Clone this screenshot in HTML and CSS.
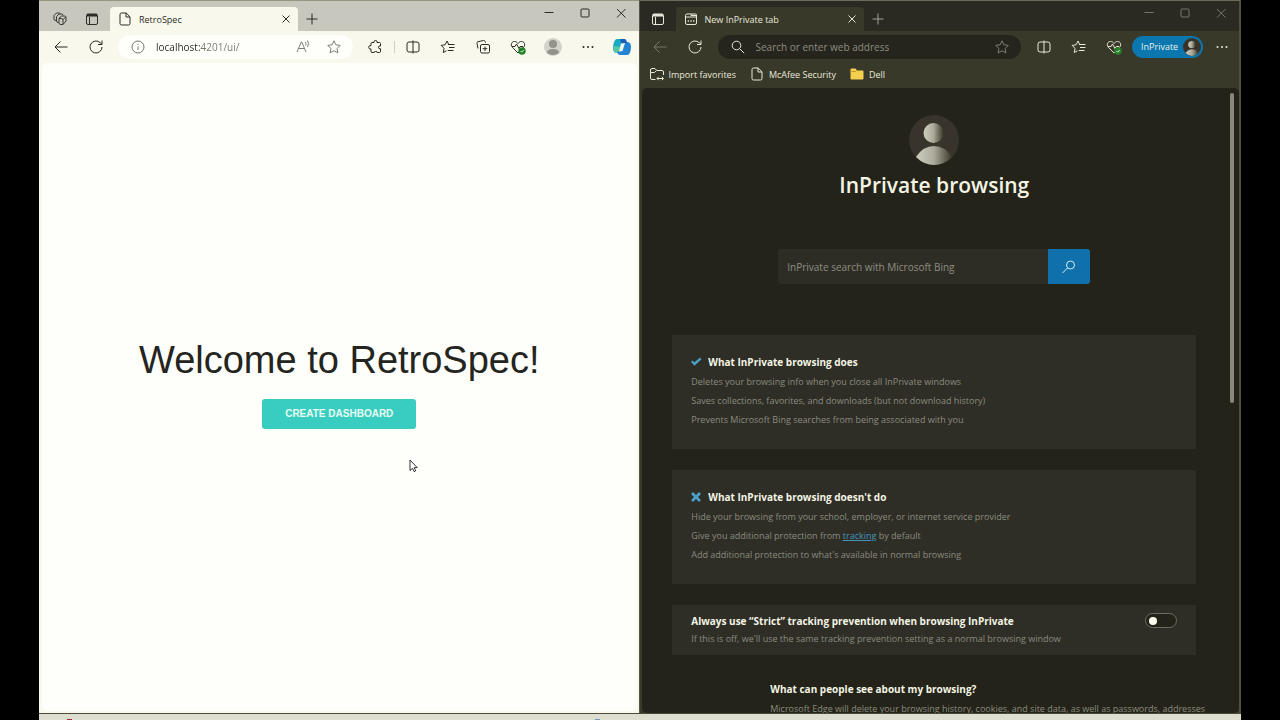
FILE: index.html
```html
<!DOCTYPE html>
<html lang="en">
<head>
<meta charset="utf-8">
<title>RetroSpec</title>
<link rel="stylesheet" href="styles.css">
</head>
<body>
<svg class="sprite" aria-hidden="true">
  <symbol id="back" viewBox="0 0 16 16"><path d="M14.500 8H2M7.500 2.500 2 8l5.500 5.500"/></symbol>
  <symbol id="reload" viewBox="0 0 16 16"><path d="M14 8a6 6 0 1 1-1.800-4.300L14 5.300M14 1.500v4h-4"/></symbol>
  <symbol id="close" viewBox="0 0 16 16"><path d="m4.500 4.500 7 7M11.500 4.500l-7 7"/></symbol>
  <symbol id="plus" viewBox="0 0 16 16"><path d="M8 2.500v11M2.500 8h11"/></symbol>
  <symbol id="min" viewBox="0 0 16 16"><path d="M3.500 7.500h9"/></symbol>
  <symbol id="max" viewBox="0 0 16 16"><rect x="4" y="4" width="8" height="8" rx="1"/></symbol>
  <symbol id="winclose" viewBox="0 0 16 16"><path d="m4 4 8.500 8.500M12.500 4 4 12.500"/></symbol>
  <symbol id="tabs" viewBox="0 0 16 16"><rect x="2.500" y="3" width="11" height="10.500" rx="1.500"/><path d="M5.500 6v7"/><path d="M3 4.300h10" stroke-width="2.500"/></symbol>
  <symbol id="work" viewBox="0 0 16 16"><g stroke-width=".9"><path d="M7 7.300 9.500 5h3q1.500 0 1.500 1.500V10L11 13.500H8.500Q7 13.500 7 12zM7 7.500h2.500q1.500 0 1.500 1.500v4.300M11 8.700l2.800-2.900"/><path d="M6.500 11.500Q4.500 11.500 4.500 10V5.500L7 3h2.500q1.300 0 1.800 1.200M4 9.500Q2 9.500 2 8V4.500L4.500 2H7q1 0 1.500.7"/></g></symbol>
  <symbol id="page" viewBox="0 0 16 16"><path d="M4.500 2h4.700L13 5.800V12.500q0 1.500-1.500 1.500h-7Q3 14 3 12.500v-9Q3 2 4.500 2zM9 2v4h4"/></symbol>
  <symbol id="private" viewBox="0 0 16 16"><path d="M4 3h8.500q1 0 1 1v8q0 1.500-1.500 1.500H4Q2.500 13.500 2.500 12V4.500Q2.500 3 4 3zM2.500 6h11M8 3v1.500h5"/><path d="M4.700 10H6M7.400 10h1.300M10 10h1.300" stroke-width="1.500"/></symbol>
  <symbol id="info" viewBox="0 0 16 16"><circle cx="8" cy="8" r="6"/><path d="M8 7.500v3.500M8 4.800v1"/></symbol>
  <symbol id="read" viewBox="0 0 16 16"><path d="M2 13 6.200 3h.6L11 13M3.500 9.500h6M10.500 3q1 1.500 0 3.500M12.500 1.500q2 3 0 6.500"/></symbol>
  <symbol id="star" viewBox="0 0 16 16"><path d="m8 1.800 1.900 4 4.300.6-3.100 3.100.8 4.400L8 11.800l-3.900 2.100.8-4.400-3.100-3.100 4.300-.6z"/></symbol>
  <symbol id="puzzle" viewBox="0 0 16 16"><path d="M5 3.500h2Q6.500 1.500 8.500 1.500t1.500 2h2.500q1 0 1 1V7q-2-.5-2 1.300t2 1.400v2.800q0 1-1 1h-2.300q.3-1-1.500-1t-1.500 1H5q-1 0-1-1V10q-2.300.3-2.300-1.700T4 6.500v-2q0-1 1-1z"/></symbol>
  <symbol id="split" viewBox="0 0 16 16"><path d="M8 1.500v13M8 3H4Q2 3 2 5v6q0 2 2 2h4M8 3h4q2 0 2 2v6q0 2-2 2H8"/></symbol>
  <symbol id="favs" viewBox="0 0 16 16"><path d="M8.800 5.800 7 2 5.100 5.800l-4 .6 2.900 2.900-.7 4.200 3.200-1.700M8 5.500h6.500M9 8.500h5.500M7.800 11.500h5.700"/></symbol>
  <symbol id="collect" viewBox="0 0 16 16"><path d="M3 9.500 2 4.500Q1.700 3 3 2.700l5.500-1.200q1.300-.2 1.700 1.200l.3 1"/><rect x="5.500" y="5.500" width="9" height="8.500" rx="1.500"/><path d="M10 7.500v4.500M7.700 9.700h4.600"/></symbol>
  <symbol id="heart" viewBox="0 0 16 16"><path d="M8 14 2.300 8.200C.2 5.500 1.700 2.500 4.500 2.500c1.500 0 2.500.7 3.500 2 1-1.300 2-2 3.500-2 2.800 0 4.300 3 2.200 5.700zM2 7.500h3L6.500 5 9 9.500l1.200-2H13"/><circle class="ok" cx="12" cy="12" r="3.700"/><path class="tick" d="m10.500 12 1.200 1.200 2-2.200"/></symbol>
  <symbol id="dots" viewBox="0 0 16 16"><g class="solid"><circle cx="3.500" cy="8" r="1"/><circle cx="8" cy="8" r="1"/><circle cx="12.500" cy="8" r="1"/></g></symbol>
  <symbol id="search" viewBox="0 0 16 16"><circle cx="6.500" cy="6.500" r="4.300"/><path d="m9.700 9.700 4.500 4.500"/></symbol>
  <symbol id="bing" viewBox="0 0 16 16"><circle cx="9.500" cy="6" r="4"/><path d="m6.500 9-5 5"/></symbol>
  <symbol id="import" viewBox="0 0 16 16"><path d="M6.500 13.500H3Q1.500 13.500 1.500 12V4Q1.500 2.500 3 2.500h3l1.700 2H13q1.500 0 1.500 1.500v3M1.500 6.500h4l2-2M8 12.500h6.500M9.700 10.800 8 12.500l1.700 1.700M12.800 10.800l1.700 1.700-1.700 1.700"/></symbol>
  <symbol id="person" viewBox="0 0 50 50"><defs><linearGradient id="metal"><stop offset="0" stop-color="#cfcfc0"/><stop offset=".5" stop-color="#aaa99a"/><stop offset="1" stop-color="#3a3728"/></linearGradient></defs><circle cx="25" cy="25" r="25" fill="#38342b"/><circle cx="24.500" cy="18" r="10" fill="url(#metal)"/><path d="M7 42Q14 31 25 31t18 11Q35 50 25 50T7 42z" fill="url(#metal)"/></symbol>
</svg>

<main class="desktop">
  <section class="window light" aria-label="RetroSpec">
    <header class="tabstrip">
      <button class="tool" aria-label="Workspaces"><svg><use href="#work"/></svg></button>
      <button class="tool" aria-label="Tab actions"><svg><use href="#tabs"/></svg></button>
      <div class="tab"><svg><use href="#page"/></svg><span>RetroSpec</span><button class="tabclose" aria-label="Close tab"><svg><use href="#close"/></svg></button></div>
      <button class="tool newtab" aria-label="New tab"><svg><use href="#plus"/></svg></button>
      <div class="controls">
        <button aria-label="Minimize"><svg><use href="#min"/></svg></button>
        <button aria-label="Maximize"><svg><use href="#max"/></svg></button>
        <button aria-label="Close"><svg><use href="#winclose"/></svg></button>
      </div>
    </header>
    <div class="toolbar">
      <button aria-label="Back"><svg><use href="#back"/></svg></button>
      <button aria-label="Reload"><svg><use href="#reload"/></svg></button>
      <div class="address">
        <svg><use href="#info"/></svg>
        <input class="url" type="text" aria-label="Address" value="localhost:4201/ui/">
        <button aria-label="Read aloud"><svg><use href="#read"/></svg></button>
        <button aria-label="Add favorite"><svg><use href="#star"/></svg></button>
      </div>
      <button aria-label="Extensions"><svg><use href="#puzzle"/></svg></button>
      <span class="divider"></span>
      <button aria-label="Split screen"><svg><use href="#split"/></svg></button>
      <button aria-label="Favorites"><svg><use href="#favs"/></svg></button>
      <button aria-label="Collections"><svg><use href="#collect"/></svg></button>
      <button aria-label="Browser essentials"><svg><use href="#heart"/></svg></button>
      <button aria-label="Profile"><svg class="profile" viewBox="0 0 18 18"><circle cx="9" cy="9" r="9" fill="#d2d2c9"/><circle cx="9" cy="6" r="4" fill="#94938b"/><ellipse cx="9" cy="14" rx="6" ry="3" fill="#94938b"/></svg></button>
      <button aria-label="More"><svg><use href="#dots"/></svg></button>
      <button class="copilot" aria-label="Copilot"><svg viewBox="0 0 20 20"><path d="M5 2h7q2 0 2.500 2l.5 2h-3q-2 0-2.500 2L8 14q-.5 2-3 2-4 0-4-5 0-4 1.500-7Q3.300 2 5 2z" fill="#18a9c4"/><path d="M2 9q-2 7 3 7 2.500 0 3-2l1-4z" fill="#55c9a0"/><path d="M15 18H8q-2 0-2.500-2L5 15q2.500 0 3-2l2-6q.5-2 5-2 4 0 4 5 0 4-1.500 6.500Q16.700 18 15 18z" fill="#2384d4"/><path d="M8 2h4q2 0 2.500 2l.5 2h-3q-2 0-2.500 1z" fill="#1c5fb4"/><path d="m9 6.500 4-.5-2.500 8-3.500.5z" fill="#f0f8f4"/></svg></button>
    </div>
    <div class="viewport welcome">
      <h1>Welcome to RetroSpec!</h1>
      <button class="create">CREATE DASHBOARD</button>
      <svg class="cursor" viewBox="0 0 9 14"><path d="M1 1v10.500l2.500-2.200 1.700 3.400 1.500-.8L5.200 8.600h3z" fill="#fff" stroke="#333"/></svg>
    </div>
  </section>

  <section class="window dark" aria-label="New InPrivate tab">
    <header class="tabstrip">
      <button class="tool" aria-label="Tab actions"><svg><use href="#tabs"/></svg></button>
      <div class="tab"><svg><use href="#private"/></svg><span>New InPrivate tab</span><button class="tabclose" aria-label="Close tab"><svg><use href="#close"/></svg></button></div>
      <button class="tool newtab" aria-label="New tab"><svg><use href="#plus"/></svg></button>
      <div class="controls">
        <button aria-label="Minimize"><svg><use href="#min"/></svg></button>
        <button aria-label="Maximize"><svg><use href="#max"/></svg></button>
        <button aria-label="Close"><svg><use href="#winclose"/></svg></button>
      </div>
    </header>
    <div class="toolbar">
      <button class="faded" aria-label="Back"><svg><use href="#back"/></svg></button>
      <button aria-label="Reload"><svg><use href="#reload"/></svg></button>
      <div class="address">
        <svg><use href="#search"/></svg>
        <input type="text" aria-label="Address" placeholder="Search or enter web address">
        <button aria-label="Add favorite"><svg><use href="#star"/></svg></button>
      </div>
      <button aria-label="Split screen"><svg><use href="#split"/></svg></button>
      <button aria-label="Favorites"><svg><use href="#favs"/></svg></button>
      <button aria-label="Browser essentials"><svg><use href="#heart"/></svg></button>
      <button class="badge">InPrivate<svg><use href="#person"/></svg></button>
      <button aria-label="More"><svg><use href="#dots"/></svg></button>
    </div>
    <nav class="bookmarks">
      <a href="#"><svg><use href="#import"/></svg>Import favorites</a>
      <a href="#"><svg><use href="#page"/></svg>McAfee Security</a>
      <a href="#"><svg viewBox="0 0 16 16"><path d="M2.500 2.500h4l1.500 2h5.500q1 0 1 1v7q0 1-1 1h-11q-1 0-1-1v-9q0-1 1-1z" fill="#f6cf4f" stroke="none"/><path d="M1.500 5.500H7l1.500-1.500" stroke="#c99b2f"/></svg>Dell</a>
    </nav>
    <div class="viewport private">
      <svg class="avatar"><use href="#person"/></svg>
      <h2>InPrivate browsing</h2>
      <form class="search">
        <input type="text" aria-label="Search the web" placeholder="InPrivate search with Microsoft Bing">
        <button type="button" aria-label="Search"><svg><use href="#bing"/></svg></button>
      </form>
      <article class="card">
        <h3><svg viewBox="0 0 12 12"><path d="m0 6 1.500-1.500 2 1.800L9 1.500l1.500 1.700-7 6.500z"/></svg>What InPrivate browsing does</h3>
        <p>Deletes your browsing info when you close all InPrivate windows</p>
        <p>Saves collections, favorites, and downloads (but not download history)</p>
        <p>Prevents Microsoft Bing searches from being associated with you</p>
      </article>
      <article class="card">
        <h3><svg viewBox="0 0 12 12"><path d="m2 1 3 3 3-3 2 2-3 3 3 3-2 2-3-3-3 3-2-2 3-3-3-3z"/></svg>What InPrivate browsing doesn't do</h3>
        <p>Hide your browsing from your school, employer, or internet service provider</p>
        <p>Give you additional protection from <a href="#">tracking</a> by default</p>
        <p>Add additional protection to what's available in normal browsing</p>
      </article>
      <article class="card strict">
        <div>
          <h3><label for="strict">Always use “Strict” tracking prevention when browsing InPrivate</label></h3>
          <p>If this is off, we'll use the same tracking prevention setting as a normal browsing window</p>
        </div>
        <input class="switch" id="strict" type="checkbox" role="switch">
      </article>
      <article class="question">
        <h3>What can people see about my browsing?</h3>
        <p>Microsoft Edge will delete your browsing history, cookies, and site data, as well as passwords, addresses</p>
      </article>
      <span class="scrollbar"></span>
    </div>
  </section>
</main>
<footer class="taskbar"><span class="app red"></span><span class="app blue"></span></footer>
</body>
</html>
```

FILE: styles.css
```css
* { box-sizing: border-box; }

body {
  margin: 0;
  padding: 0 39px;
  height: 100vh;
  display: flex;
  flex-direction: column;
  overflow: hidden;
  background: #000;
  font-family: "Open Sans", "Noto Sans", sans-serif;
  font-size: 9px;
}

button, input { font: inherit; color: inherit; border: 0; padding: 0; background: none; }
h1, h2, h3, p { margin: 0; }
svg { flex: none; width: 16px; height: 16px; fill: none; stroke: currentColor; stroke-width: 1; }
.sprite { position: absolute; width: 0; height: 0; }
.solid { fill: currentColor; stroke: none; }
.ok { fill: #23812a; stroke: none; }
.tick { stroke: #dff0d0; }

.desktop { flex: 1; min-height: 0; display: flex; }
.window { flex: 1; min-width: 0; display: flex; flex-direction: column; border-top: 1px solid; }
.light { --strip: #c7c7bd; --bar: #f8f8ec; --field: #fefefa; color: #2b2b26; background: var(--bar); border-color: #96967a; }
.dark { --strip: #2a2a22; --bar: #39392a; --field: #25251d; color: #e8e8da; background: var(--bar); border-color: #6c6c5c; border-left: 1px solid #55554b; border-right: 2px solid #50503c; }

.tabstrip { flex: none; display: flex; align-items: center; height: 30px; background: var(--strip); }
.tabstrip > .tool { display: flex; justify-content: center; align-items: center; width: 32px; padding-top: 6px; }
.light .tabstrip { padding-left: 5px; }
.dark .tabstrip { padding-left: 2px; }
.tab { align-self: flex-end; display: flex; align-items: center; gap: 6px; width: 188px; height: 24px; margin-left: 2px; padding: 0 4px 0 7px; border-radius: 4px 4px 0 0; background: var(--bar); }
.tab span { flex: 1; }
.tabclose, .controls button { display: flex; align-items: center; justify-content: center; }
.tabstrip > .newtab { width: 28px; }
.controls { display: flex; margin-left: auto; padding-bottom: 6px; }
.controls button { width: 36px; }
.dark .controls { color: #77776a; }
.dark .newtab { color: #a0a094; }

.toolbar { flex: none; display: flex; align-items: center; height: 31px; padding-left: 4px; }
.dark .toolbar { padding-left: 3px; }
.toolbar > button { display: flex; flex: none; align-items: center; justify-content: center; width: 35px; }
.faded { color: #77776a; }
.address { flex: 1; min-width: 0; display: flex; align-items: center; height: 24px; margin: 0 5px; padding: 0 11px 0 12px; border-radius: 12px; background: var(--field); font-size: 10px; }
.address input { flex: 1; min-width: 0; margin-left: 10px; outline: 0; }
.address button { display: flex; margin-left: 15px; color: #7d7d74; }
.light .address > svg { color: #77776e; }
.url { color: transparent; background: linear-gradient(90deg, #262620 45px, #77776c 45px); background-clip: text; }
.divider { width: 1px; height: 12px; margin: 0 1px; background: #cecec4; }
.toolbar .profile { width: 18px; height: 18px; stroke: none; }
.toolbar > .copilot { width: 33px; }
.copilot svg { width: 20px; height: 20px; stroke: none; }
.toolbar > .badge { justify-content: space-between; width: 71px; height: 22px; margin: 0 1px; padding: 0 2px 0 9px; border-radius: 11px; background: #0c76ae; color: #e4f4ef; }
.badge svg { width: 18px; height: 18px; stroke: none; }

.bookmarks { flex: none; display: flex; align-items: center; gap: 13px; height: 25px; padding: 0 10px 1px 9px; }
.bookmarks a { display: flex; align-items: center; gap: 4px; color: inherit; text-decoration: none; }

.viewport { position: relative; flex: 1; min-height: 0; overflow: hidden; margin: 1px 2px 2px 3px; border-radius: 5px; display: flex; flex-direction: column; align-items: center; }
.welcome { justify-content: center; background: #fefefa; }
.welcome h1 { margin-top: -8px; font: 400 38px/44px "Liberation Sans", Arial, sans-serif; color: #242420; }
.create { height: 30px; margin-top: 17px; padding: 0 23px; border-radius: 3px; background: #39cdc2; color: #e8fbf0; font: 700 10px "Liberation Sans", Arial, sans-serif; }
.cursor { position: absolute; left: 367px; top: 396px; width: 9px; height: 14px; }

.private { margin: 1px 0 0 2px; padding: 27px 12px 0 0; background: #23231a; }
.avatar { width: 50px; height: 50px; stroke: none; }
.private h2 { margin-top: 4px; font-size: 21px; line-height: 32px; font-weight: 600; color: #f4f4e4; }
.search { flex: none; display: flex; width: 312px; height: 35px; margin-top: 48px; border-radius: 3px; overflow: hidden; background: #2d2d26; font-size: 10px; }
.search input { flex: 1; min-width: 0; padding-left: 9px; outline: 0; }
input::placeholder { color: #8d8d80; opacity: 1; }
.search button { display: flex; align-items: center; justify-content: center; width: 42px; background: #0f70ac; color: #d4ecec; }

.card { flex: none; width: 90%; max-width: 524px; margin-top: 21px; padding: 17px 19px 20px; background: #2e2e27; }
.search + .card { margin-top: 51px; }
.card h3, .question h3 { display: flex; align-items: center; gap: 5px; font-size: 10px; line-height: 20px; font-weight: 700; color: #f4f4e4; }
.card h3 svg { width: 12px; height: 12px; fill: #4a9fc6; stroke: none; }
.card p, .question p { line-height: 19px; color: #8b8b7e; white-space: nowrap; }
.card a { color: #4395bd; }
.strict { display: flex; justify-content: space-between; align-items: flex-start; padding: 6px 19px 8px; }
.strict p { line-height: 16px; }
.switch { appearance: none; display: flex; align-items: center; width: 32px; height: 15px; margin: 2px 0 0; padding: 0 3px; border: 1px solid #6c6c60; border-radius: 8px; background: #23231a; }
.switch::before { content: ""; width: 8px; height: 8px; border-radius: 50%; background: #fffff0; }
.switch:checked { justify-content: flex-end; }
.question { flex: none; width: 90%; max-width: 524px; margin-top: 24px; padding-left: 98px; }
.scrollbar { position: absolute; top: 5px; right: 5px; width: 4px; height: 310px; border-radius: 2px; background: #88887d; }

.taskbar { flex: none; display: flex; align-items: flex-end; height: 7px; padding: 0 641px 0 28px; justify-content: space-between; border-top: 1px solid #4b4b38; background: #ddddd0; }
.app { width: 5px; height: 1px; }
.red { background: #a02c44; }
.blue { background: #6d98bd; }
```
